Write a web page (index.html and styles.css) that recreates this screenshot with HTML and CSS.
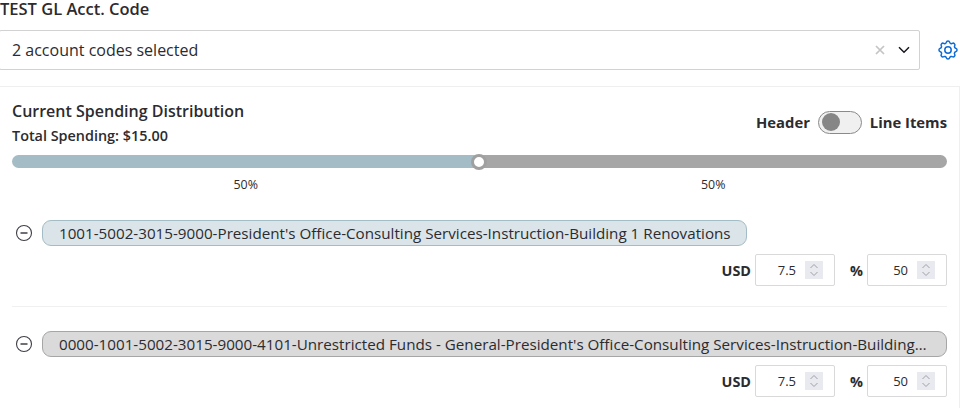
FILE: index.html
```html
<!DOCTYPE html>
<html lang="en">
<head>
<meta charset="utf-8">
<title>Spending Distribution</title>
<link rel="stylesheet" href="styles.css">
</head>
<body>
<div class="page">
  <div class="field-label">TEST GL Acct. Code</div>
  <div class="select-row">
    <div class="select">
      <span class="select-value">2 account codes selected</span>
      <svg class="clear" width="10" height="10" viewBox="0 0 10 10"><path d="M1 1l8 8M9 1l-8 8" stroke="#c4c4c4" stroke-width="1.7" fill="none"/></svg>
      <svg class="caret" width="12" height="8" viewBox="0 0 12 8"><path d="M1 1.2l5 5 5-5" stroke="#16161d" stroke-width="1.5" fill="none"/></svg>
    </div>
    <svg class="gear" width="24" height="24" viewBox="0 0 24 24" fill="none" stroke="#0f6cd4" stroke-width="1.5" stroke-linejoin="round" stroke-linecap="round"><path d="M10.3 4.3c.4-1.8 3-1.8 3.4 0a1.7 1.7 0 0 0 2.6 1.1c1.5-.9 3.3.8 2.4 2.4a1.7 1.7 0 0 0 1 2.5c1.8.5 1.8 3 0 3.4a1.7 1.7 0 0 0-1 2.6c.9 1.5-.9 3.3-2.4 2.4a1.7 1.7 0 0 0-2.6 1c-.4 1.8-3 1.8-3.4 0a1.7 1.7 0 0 0-2.6-1c-1.5.9-3.3-.9-2.4-2.4a1.7 1.7 0 0 0-1-2.6c-1.8-.4-1.8-2.9 0-3.4a1.7 1.7 0 0 0 1-2.5c-.9-1.6.9-3.3 2.4-2.4a1.7 1.7 0 0 0 2.6-1.1z"/><circle cx="12" cy="12" r="3.2"/></svg>
  </div>
  <section class="panel">
    <div class="panel-head">
      <div>
        <h2 class="panel-title">Current Spending Distribution</h2>
        <div class="panel-total">Total Spending: $15.00</div>
      </div>
      <div class="toggle-group">
        <span>Header</span>
        <span class="toggle"><span class="toggle-knob"></span></span>
        <span>Line Items</span>
      </div>
    </div>
    <div class="slider">
      <div class="slider-left"></div>
      <div class="slider-right"></div>
      <span class="slider-thumb"></span>
    </div>
    <div class="slider-labels"><span>50%</span><span>50%</span></div>

    <div class="item item-first">
      <div class="chip-row">
        <svg class="minus" width="18" height="18" viewBox="0 0 18 18" fill="none" stroke="#3f3f46"><circle cx="9" cy="9" r="7.5" stroke-width="1.1"/><path d="M5.5 9h7" stroke-width="1.5"/></svg>
        <div class="chip chip-blue">1001-5002-3015-9000-President's Office-Consulting Services-Instruction-Building 1 Renovations</div>
      </div>
      <div class="amounts">
        <label class="amount-label">USD</label>
        <div class="num"><span class="num-value">7.5</span><span class="spin"><svg width="10" height="14" viewBox="0 0 10 14" fill="none" stroke="#a0a0a8"><path d="M1.5 5L5 1.5 8.5 5M1.5 9L5 12.5 8.5 9"/></svg></span></div>
        <label class="amount-label pct">%</label>
        <div class="num"><span class="num-value">50</span><span class="spin"><svg width="10" height="14" viewBox="0 0 10 14" fill="none" stroke="#a0a0a8"><path d="M1.5 5L5 1.5 8.5 5M1.5 9L5 12.5 8.5 9"/></svg></span></div>
      </div>
    </div>

    <div class="item">
      <div class="chip-row">
        <svg class="minus" width="18" height="18" viewBox="0 0 18 18" fill="none" stroke="#3f3f46"><circle cx="9" cy="9" r="7.5" stroke-width="1.1"/><path d="M5.5 9h7" stroke-width="1.5"/></svg>
        <div class="chip chip-grey">0000-1001-5002-3015-9000-4101-Unrestricted Funds - General-President's Office-Consulting Services-Instruction-Building 1 Renovations</div>
      </div>
      <div class="amounts">
        <label class="amount-label">USD</label>
        <div class="num"><span class="num-value">7.5</span><span class="spin"><svg width="10" height="14" viewBox="0 0 10 14" fill="none" stroke="#a0a0a8"><path d="M1.5 5L5 1.5 8.5 5M1.5 9L5 12.5 8.5 9"/></svg></span></div>
        <label class="amount-label pct">%</label>
        <div class="num"><span class="num-value">50</span><span class="spin"><svg width="10" height="14" viewBox="0 0 10 14" fill="none" stroke="#a0a0a8"><path d="M1.5 5L5 1.5 8.5 5M1.5 9L5 12.5 8.5 9"/></svg></span></div>
      </div>
    </div>
  </section>
</div>
</body>
</html>
```
FILE: styles.css
```css
* { box-sizing: border-box; }
html, body { margin: 0; height: 100%; background: #fff; overflow: hidden; }
body { font-family: "Open Sans", sans-serif; color: #2b2b30; }
.page { width: 968px; height: 408px; overflow: hidden; }
.field-label { height: 30px; font-size: 16.5px; line-height: 17px; font-weight: 600; color: #2b2b30; }
.select-row { display: flex; align-items: center; width: 960px; }
.select { display: flex; align-items: center; width: 921px; height: 40px; margin-left: -1px; padding: 0 9px 0 12px; background: #fff; border: 1px solid #d2d2d2; border-radius: 2px; }
.select-value { flex: 1; font-size: 16px; color: #2b2b30; }
.clear { margin-right: 13px; }
.gear { flex: none; margin-left: 16px; }
.panel { width: 960px; height: 322px; margin-top: 16px; padding: 0 12px; border-top: 1px solid #efefef; border-right: 1px solid #efefef; }
.panel-head { display: flex; justify-content: space-between; height: 68px; padding-top: 13px; }
.panel-title { margin: 0; font-size: 16px; line-height: 22px; font-weight: 600; color: #2b2b30; }
.panel-total { margin-top: 5px; font-size: 14.4px; line-height: 18px; font-weight: 600; color: #2b2b30; }
.toggle-group { display: flex; align-items: center; gap: 8px; height: 24px; margin-top: 10px; font-size: 14.8px; font-weight: 700; color: #2b2b30; }
.toggle { display: flex; align-items: center; width: 44px; height: 23px; padding-left: 3px; background: #f0f0f0; border: 1px solid #8a8a8a; border-radius: 12px; }
.toggle-knob { width: 18px; height: 18px; background: #868686; border-radius: 50%; }
.slider { position: relative; display: flex; height: 13px; }
.slider-left { flex: 1; background: #a4bcc6; border-radius: 7px 0 0 7px; }
.slider-right { flex: 1; background: #a6a6a6; border-radius: 0 7px 7px 0; }
.slider-thumb { position: absolute; left: 459px; top: -1px; width: 16px; height: 16px; background: #fff; border: 3px solid #a0a0a0; border-radius: 50%; }
.slider-labels { display: flex; margin-top: 9px; font-size: 12.4px; line-height: 16px; color: #2b2b30; }
.slider-labels span { flex: 1; text-align: center; }
.item-first { height: 114px; padding-top: 27px; border-bottom: 1px solid #f0f0f0; }
.item + .item { padding-top: 24px; }
.chip-row { display: flex; align-items: center; gap: 9px; margin-left: 3px; }
.minus { flex: none; }
.chip { height: 26px; padding: 0 15px 0 16px; font-size: 15.2px; line-height: 25px; color: #2b2b30; border-radius: 9px; white-space: nowrap; overflow: hidden; text-overflow: ellipsis; }
.chip-blue { background: #dbe5e9; border: 1px solid #a4bcc6; }
.chip-grey { flex: 1; min-width: 0; padding-right: 17px; background: #dadada; border: 1px solid #a6a6a6; }
.amounts { display: flex; justify-content: flex-end; align-items: center; margin-top: 8px; }
.amount-label { font-size: 14.4px; font-weight: 700; color: #2b2b30; margin-right: 4px; }
.pct { margin-left: 15px; }
.num { display: flex; align-items: center; justify-content: flex-end; width: 80px; height: 32px; padding-right: 11px; background: #fff; border: 1px solid #d9d9d9; border-radius: 2px; }
.num-value { font-size: 13px; color: #2b2b30; margin-right: 9px; }
.spin { display: flex; align-items: center; justify-content: center; width: 18px; height: 18px; background: #e9e9f0; }
```
